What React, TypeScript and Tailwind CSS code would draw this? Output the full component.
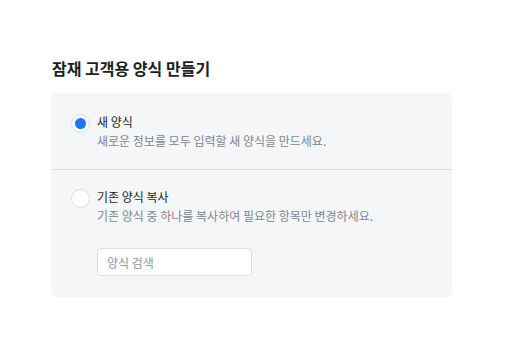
export default function App() {
  return (
    <div
      className="h-[352px] w-[512px] bg-white pl-[51px] pt-[58px] text-[#1c1e21]"
      style={{ fontFamily: '"Noto Sans CJK KR", "Noto Sans", sans-serif' }}
    >
      <h1 className="pl-px text-[16px] font-semibold leading-[20px]">잠재 고객용 양식 만들기</h1>

      <div className="mt-[15px] w-[401px] rounded-md bg-[#f5f6f7]">
        <label className="flex items-start gap-[7px] px-5 pb-5 pt-[21px]">
          <span className="flex h-[19px] w-[19px] shrink-0 items-center justify-center rounded-full border border-[#dadde1] bg-white">
            <span className="h-[11px] w-[11px] rounded-full bg-[#1877f2]" />
          </span>
          <span className="flex flex-col">
            <span className="text-[12px] leading-[16px]">새 양식</span>
            <span className="mt-[3px] text-[12px] leading-[16px] text-[#80868e]">
              새로운 정보를 모두 입력할 새 양식을 만드세요.
            </span>
          </span>
        </label>

        <div className="h-px bg-[#dadde1]" />

        <div className="px-5 pb-[21px] pt-[19px]">
          <label className="flex items-start gap-[7px]">
            <span className="h-[19px] w-[19px] shrink-0 rounded-full border border-[#dadde1] bg-white" />
            <span className="flex flex-col">
              <span className="text-[12px] leading-[16px]">기존 양식 복사</span>
              <span className="mt-[3px] text-[12px] leading-[16px] text-[#80868e]">
                기존 양식 중 하나를 복사하여 필요한 항목만 변경하세요.
              </span>
            </span>
          </label>
          <input
            placeholder="양식 검색"
            className="ml-[26px] mt-6 h-[28px] w-[155px] rounded-[4px] border border-[#dadde1] bg-white px-[9px] text-[12px] text-[#1c1e21] outline-none placeholder:text-[#8d949e]"
          />
        </div>
      </div>
    </div>
  );
}
